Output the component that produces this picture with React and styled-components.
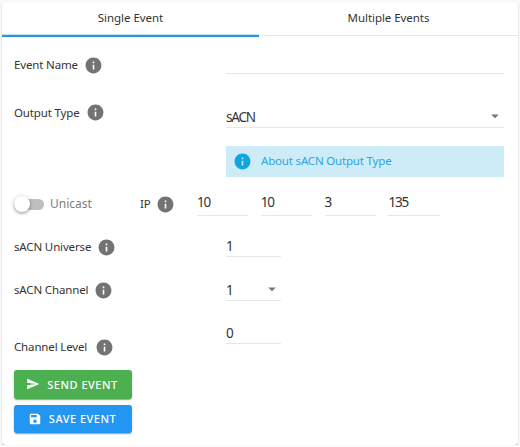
import styled, { createGlobalStyle } from "styled-components";
import { MdInfo, MdSave, MdSend, MdArrowDropDown } from "react-icons/md";

const App = () => {
  return (
    <>
      <GlobalStyle />
      <Card>
        <Tabs>
          <Tab $active>
            <TabText>Single Event</TabText>
          </Tab>
          <Tab>
            <TabText>Multiple Events</TabText>
          </Tab>
        </Tabs>

        <Form>
          <Row>
            <Label>
              <LabelText $width="63px">Event Name</LabelText>
              <MdInfo />
            </Label>
            <Field $height="24px" />
          </Row>

          <Row $top="17px">
            <Label>
              <LabelText $width="65px">Output Type</LabelText>
              <MdInfo />
            </Label>
            <Field $height="31px">
              <Value>sACN</Value>
              <MdArrowDropDown />
            </Field>
          </Row>

          <Alert>
            <MdInfo />
            <AlertText>About sACN Output Type</AlertText>
          </Alert>

          <IpRow>
            <Unicast>
              <Switch>
                <Knob />
              </Switch>
              <UnicastText>Unicast</UnicastText>
            </Unicast>
            <IpLabel>
              <LabelText $width="9px">IP</LabelText>
              <MdInfo />
            </IpLabel>
            <IpFields>
              {["10", "10", "3", "135"].map((part, i) => (
                <IpField key={i}>
                  <Value>{part}</Value>
                </IpField>
              ))}
            </IpFields>
          </IpRow>

          <Row $top="13px">
            <Label>
              <LabelText $width="76px">sACN Universe</LabelText>
              <MdInfo />
            </Label>
            <Field $small $height="25px">
              <Value>1</Value>
            </Field>
          </Row>

          <Row $top="13px">
            <Label>
              <LabelText $width="73px">sACN Channel</LabelText>
              <MdInfo />
            </Label>
            <Field $small $height="26px">
              <Value>1</Value>
              <MdArrowDropDown />
            </Field>
          </Row>

          <Row $top="13px" $height="39px" $end>
            <Label>
              <LabelText $width="74px">Channel Level</LabelText>
              <MdInfo />
            </Label>
            <Field $small $height="26px">
              <Value>0</Value>
            </Field>
          </Row>

          <Buttons>
            <Button $color="#4caf50">
              <MdSend />
              <span>SEND EVENT</span>
            </Button>
            <Button $color="#2196f3">
              <MdSave />
              <span>SAVE EVENT</span>
            </Button>
          </Buttons>
        </Form>
      </Card>
    </>
  );
};

export default App;

const GlobalStyle = createGlobalStyle`
  * {
    box-sizing: border-box;
  }
  body {
    margin: 0;
    background: #fafafa;
    color: #333;
    font-family: "Noto Sans", "Open Sans", sans-serif;
  }
`;

const Card = styled.main`
  width: 516px;
  height: 443px;
  margin: 2px 2px 0;
  background: #fff;
  border-radius: 4px;
  box-shadow: 0 2px 1px -1px rgba(0, 0, 0, 0.2), 0 1px 1px rgba(0, 0, 0, 0.14),
    0 1px 3px rgba(0, 0, 0, 0.12);
`;

const Tabs = styled.nav`
  display: grid;
  grid-template-columns: 257px 1fr;
  height: 35px;
`;

const Tab = styled.div`
  display: flex;
  justify-content: center;
  padding-top: 8px;
  box-shadow: ${({ $active }) =>
    $active ? "inset 0 -2px #2698d6, inset 0 -3px #c3e4f4" : "inset 0 -1px #fff, inset 0 -2px #e7e7e7"};
`;

const TabText = styled.span`
  font-size: 11.5px;
  line-height: 16px;
  letter-spacing: -0.05px;
  white-space: nowrap;
`;

const Form = styled.section`
  padding: 13px 14px 0 12px;
`;

const Row = styled.div`
  display: grid;
  grid-template-columns: 212px 1fr;
  align-items: ${({ $end }) => ($end ? "end" : "center")};
  height: ${({ $height }) => $height || "30px"};
  margin-top: ${({ $top }) => $top || 0};

  > :last-child {
    align-self: start;
  }
`;

const Label = styled.div`
  display: flex;
  align-items: center;
  height: 20px;

  svg {
    width: 19px;
    height: 19px;
    margin-left: 7px;
    color: #737373;
  }
`;

const LabelText = styled.span`
  width: ${({ $width }) => $width};
  font-size: 11.5px;
  line-height: 18px;
  letter-spacing: -0.15px;
  white-space: nowrap;
`;

const Field = styled.div`
  display: flex;
  align-items: flex-end;
  justify-content: space-between;
  width: ${({ $small }) => ($small ? "55px" : "100%")};
  height: ${({ $height }) => $height};
  border-bottom: 1px solid #e4e8e8;

  svg {
    width: 18px;
    height: 18px;
    margin-bottom: 2px;
    color: #757575;
  }
`;

const Value = styled.span`
  font-size: 13.5px;
  line-height: 20px;
  letter-spacing: -1.2px;
`;

const Alert = styled.div`
  display: flex;
  align-items: center;
  height: 31px;
  margin: 19px 0 0 212px;
  padding-left: 7px;
  background: #ceecf8;
  color: #2aa5e0;

  svg {
    width: 19px;
    height: 19px;
    color: #0fa5e1;
  }
`;

const AlertText = styled.span`
  margin-left: 9px;
  font-size: 11.5px;
  line-height: 16px;
  letter-spacing: -0.18px;
  padding-bottom: 1px;
  white-space: nowrap;
`;

const IpRow = styled.div`
  display: flex;
  align-items: center;
  height: 30px;
  margin-top: 12px;
`;

const Unicast = styled.div`
  display: flex;
  align-items: center;
  width: 126px;
`;

const Switch = styled.div`
  display: flex;
  align-items: center;
  width: 30px;
  height: 11px;
  border-radius: 6px;
  background: #bebebe;
`;

const Knob = styled.div`
  width: 16px;
  height: 16px;
  flex: none;
  border-radius: 50%;
  background: #fff;
  box-shadow: 0 2px 3px rgba(0, 0, 0, 0.25), 0 0 4px rgba(0, 0, 0, 0.15);
`;

const UnicastText = styled.span`
  margin-left: 6px;
  color: #7b7f7f;
  font-size: 12px;
  line-height: 18px;
`;

const IpLabel = styled(Label)`
  width: 57px;
`;

const IpFields = styled.div`
  display: flex;
  gap: 12.5px;
`;

const IpField = styled.div`
  width: 51.3px;
  height: 27px;
  margin-bottom: 3px;
  padding-bottom: 3px;
  display: flex;
  align-items: flex-end;
  border-bottom: 1px solid #e4e8e8;
`;

const Buttons = styled.div`
  display: flex;
  flex-direction: column;
  gap: 6px;
  margin-top: 13px;
`;

const Button = styled.button`
  display: flex;
  align-items: center;
  justify-content: center;
  gap: 7px;
  width: 118px;
  height: 28.5px;
  padding: 0 2px 0 0;
  border: none;
  border-radius: 3px;
  background: ${({ $color }) => $color};
  color: #fff;
  font-family: inherit;
  font-size: 11px;
  font-weight: 500;
  letter-spacing: 0.5px;
  white-space: nowrap;
  box-shadow: 0 2px 1px -1px rgba(0, 0, 0, 0.2), 0 1px 2px rgba(0, 0, 0, 0.25);

  svg {
    width: 14px;
    height: 14px;
  }
`;
